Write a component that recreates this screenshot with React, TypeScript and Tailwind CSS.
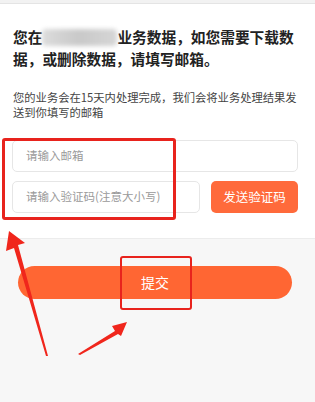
export default function App() {
  return (
    <div
      className="relative w-[315px] h-[402px] overflow-hidden bg-[#f7f7f7]"
      style={{ fontFamily: '"Noto Sans CJK SC", "Noto Sans", sans-serif' }}
    >
      {/* top strip */}
      <div className="h-[4px] bg-[#f2f2f2] border-b border-[#e4e4e4]" />

      {/* white card */}
      <div className="bg-white px-[13px] pt-[22px] pb-[25px] border-b border-[#ececec]">
        <h1 className="text-[14.7px] leading-[22px] font-bold text-[#222]">
          您在
          <span className="inline-block align-middle w-[75px] h-[17px] -mt-[3px] rounded-[4px] bg-gradient-to-r from-[#dcdcdc] via-[#c9c9c9] to-[#d6d6d6] blur-[2px]" />
          业务数据，如您需要下载数据，或删除数据，请填写邮箱。
        </h1>
        <p className="mt-[20px] text-[11.3px] leading-[15px] text-[#444]">
          您的业务会在15天内处理完成，我们会将业务处理结果发送到你填写的邮箱
        </p>

        <div className="mt-[20px] -ml-[1px] mr-[4px] flex flex-col gap-[9px]">
          <div className="h-[32px] rounded-[5px] border border-[#e6e6e6] bg-white flex items-center px-[13px]">
            <span className="text-[11.5px] text-[#9a9a9a]">请输入邮箱</span>
          </div>
          <div className="flex items-center gap-[11px]">
            <div className="w-[188px] h-[32px] rounded-[5px] border border-[#e6e6e6] bg-white flex items-center px-[13px]">
              <span className="text-[11.5px] text-[#9a9a9a]">请输入验证码(注意大小写)</span>
            </div>
            <button className="flex-1 h-[32px] rounded-[5px] bg-[#ff6a3b] text-white text-[12.5px] flex items-center justify-center">
              发送验证码
            </button>
          </div>
        </div>
      </div>

      {/* submit */}
      <div className="pl-[18px] pr-[23px] mt-[27px]">
        <button className="w-full h-[33px] rounded-full bg-[#ff6633] text-white text-[14px] flex items-center justify-center">
          提交
        </button>
      </div>

      {/* annotation boxes */}
      <div className="absolute left-[2px] top-[138px] w-[174px] h-[82px] border-[3px] border-[#e8231d] rounded-[3px]" />
      <div className="absolute left-[120px] top-[256px] w-[72px] h-[54px] border-[2.5px] border-[#e8231d] rounded-[3px]" />

      {/* annotation arrows */}
      <svg className="absolute left-0 top-0 pointer-events-none" width="315" height="402" viewBox="0 0 315 402">
        <polygon points="46,356 14,248 6,251 9,231 25,243 18,245 48,356" fill="#f0261c" />
        <polygon points="78,354 115,331 112,326 127,322 121,336 118,334 80,355" fill="#f0261c" />
      </svg>
    </div>
  );
}
